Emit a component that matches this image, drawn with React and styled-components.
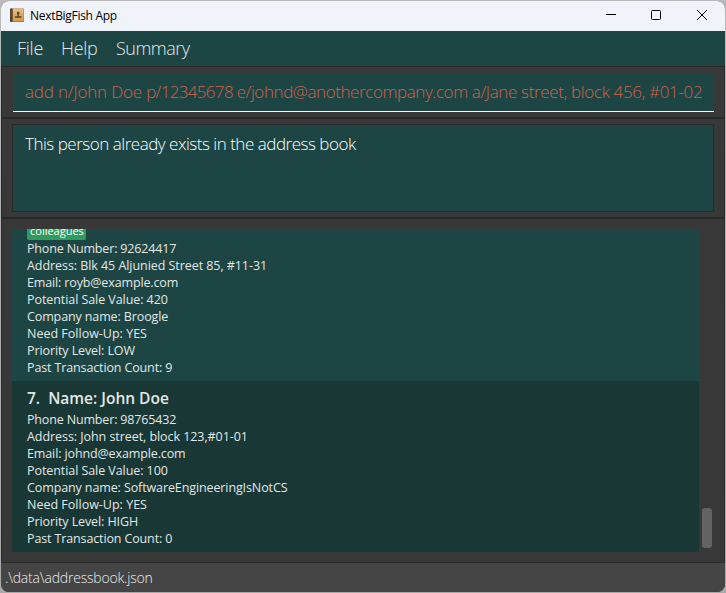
import React from "react";
import styled, { createGlobalStyle } from "styled-components";

const Global = createGlobalStyle`
  * { box-sizing: border-box; }
  body { margin: 0; background: #c4c4c4; overflow: hidden; font-family: "Open Sans", "Noto Sans", sans-serif; }
`;

const Frame = styled.div`
  width: 726px;
  height: 593px;
  padding: 1px;
  background: linear-gradient(#b9b9bb, #b9b9bb 30px, #a9a9a9);
`;

const Window = styled.div`
  width: 724px;
  height: 591px;
  display: flex;
  flex-direction: column;
  overflow: hidden;
  border-radius: 8px;
  background: #383838;
`;

const TitleBar = styled.header`
  height: 30px;
  flex: none;
  display: flex;
  align-items: center;
  padding-left: 9px;
  background: #f0f3f9;
  color: #000;
`;

const Title = styled.span`
  flex: 1;
  margin-left: 5px;
  font-size: 12px;
  line-height: 16px;
  white-space: pre;
  letter-spacing: ${(p) => p.$spacing}px;
`;

const WindowButton = styled.button`
  width: 46px;
  height: 30px;
  padding: 0 0 2px;
  border: 0;
  background: transparent;
  display: flex;
  align-items: center;
  justify-content: center;
`;

const MenuBar = styled.nav`
  height: 35px;
  flex: none;
  display: flex;
  padding-left: 16px;
  background: #1d4543;
`;

const MenuItem = styled.span`
  width: ${(p) => p.$width}px;
  font-size: 18px;
  font-weight: 300;
  line-height: 35px;
  letter-spacing: ${(p) => p.$spacing}px;
  color: #e4eae9;
  white-space: pre;
`;

const Body = styled.main`
  flex: 1;
  display: flex;
  flex-direction: column;
  border: 1px solid #2a2a2a;
  border-width: 1px 1px 0;
`;

const Divider = styled.div`
  height: 2px;
  flex: none;
  background: #2a2a2a;
`;

const CommandBox = styled.div`
  height: 39px;
  flex: none;
  margin: 6px 10px 5px 11px;
  padding-left: 12px;
  background: #1d4543;
  border-bottom: 1px solid #fff;
  color: #cf634d;
  font-size: 17px;
  font-weight: 300;
  line-height: 38px;
  white-space: pre;
`;

const CommandPart = styled.span`
  letter-spacing: ${(p) => p.$spacing}px;
`;

const ResultBox = styled.div`
  height: 88px;
  flex: none;
  margin: 5px 10px 5px;
  padding: 6px 12px;
  background: #1d4543;
  border: 1px solid #2a2a2a;
  color: #fff;
  font-size: 17px;
  font-weight: 300;
  line-height: 26px;
  letter-spacing: ${(p) => p.$spacing}px;
  white-space: pre;
`;

const ListArea = styled.section`
  height: 323px;
  flex: none;
  margin: 10px 12px 0 10px;
  display: flex;
  justify-content: space-between;
`;

const PersonList = styled.div`
  width: 687px;
  overflow: hidden;
  display: flex;
  flex-direction: column;
`;

const Card = styled.article`
  height: ${(p) => p.$height}px;
  flex: none;
  padding: ${(p) => p.$top}px 0 0 15px;
  background: ${(p) => (p.$alternate ? "#1d4543" : "#183735")};
  color: #e3e8e7;
`;

const Tag = styled.div`
  width: 59px;
  height: 17px;
  margin: -6px 0 0;
  padding-left: 3px;
  border-radius: 2px;
  background: #2e9c5c;
  color: #fff;
  font-size: 11px;
  line-height: 16px;
  letter-spacing: ${(p) => p.$spacing}px;
`;

const CardName = styled.h2`
  height: 25px;
  margin: 0;
  font-size: 15.5px;
  font-weight: 600;
  line-height: 25px;
  letter-spacing: ${(p) => p.$spacing}px;
  white-space: pre;
`;

const Field = styled.div`
  height: 17px;
  font-size: 12.5px;
  line-height: 17px;
  letter-spacing: ${(p) => p.$spacing}px;
  white-space: pre;
`;

const ScrollTrack = styled.div`
  width: 10px;
  display: flex;
  align-items: flex-end;
  padding-bottom: 4px;
`;

const ScrollThumb = styled.div`
  width: 10px;
  height: 40px;
  border-radius: 3px;
  background: #636363;
`;

const StatusBar = styled.footer`
  height: 30px;
  flex: none;
  padding-left: 4px;
  border-top: 1px solid #2a2a2a;
  background: #454545;
  color: #ececec;
  font-size: 14px;
  font-weight: 300;
  line-height: 29px;
  letter-spacing: ${(p) => p.$spacing}px;
`;

const roy = [
  ["Phone Number: 92624417", -0.16],
  ["Address: Blk 45 Aljunied Street 85, #11-31", -0.06],
  ["Email: royb@example.com", -0.14],
  ["Potential Sale Value: 420", -0.07],
  ["Company name: Broogle", -0.12],
  ["Need Follow-Up: YES", 0],
  ["Priority Level: LOW", -0.1],
  ["Past Transaction Count: 9", -0.13],
];

const john = [
  ["Phone Number: 98765432", -0.16],
  ["Address: John street, block 123,#01-01", -0.06],
  ["Email: johnd@example.com", -0.12],
  ["Potential Sale Value: 100", -0.07],
  ["Company name: SoftwareEngineeringIsNotCS", -0.11],
  ["Need Follow-Up: YES", 0],
  ["Priority Level: HIGH", -0.1],
  ["Past Transaction Count: 0", -0.13],
];

const Fields = ({ items }) =>
  items.map(([text, spacing]) => (
    <Field key={text} $spacing={spacing}>{text}</Field>
  ));

const BookIcon = () => (
  <svg width="15" height="16" viewBox="0 0 15 16">
    <defs>
      <linearGradient id="cover" x1="0" y1="0" x2="0" y2="1">
        <stop offset="0" stopColor="#e3be80" />
        <stop offset="1" stopColor="#d39c4a" />
      </linearGradient>
    </defs>
    <rect x="0" y="0.5" width="14" height="13.5" rx="0.8" fill="#a87c42" />
    <rect x="0" y="0.5" width="2.6" height="13.5" rx="0.8" fill="#574638" />
    <rect x="3" y="1" width="10.5" height="12" fill="url(#cover)" />
    <rect x="7" y="3.8" width="2.4" height="3" rx="0.8" fill="#5c401f" />
    <path d="M7.6 6.5h1.2v1.8h2.7v1.5H4.9V8.3h2.7z" fill="#5c401f" />
  </svg>
);

export default function App() {
  return (
    <>
      <Global />
      <Frame>
        <Window>
          <TitleBar>
            <BookIcon />
            <Title $spacing={-0.3}>NextBigFish App</Title>
            <WindowButton aria-label="Minimize">
              <svg width="12" height="12" stroke="#000"><path d="M2 5.5h10" /></svg>
            </WindowButton>
            <WindowButton aria-label="Maximize">
              <svg width="12" height="12" fill="none" stroke="#000"><rect x="1.5" y="1.5" width="9" height="9" rx="1" /></svg>
            </WindowButton>
            <WindowButton aria-label="Close">
              <svg width="12" height="12" stroke="#000"><path d="M1 1l10 10M11 1L1 11" /></svg>
            </WindowButton>
          </TitleBar>
          <MenuBar>
            <MenuItem $width={44} $spacing={-0.25}>File</MenuItem>
            <MenuItem $width={55} $spacing={-0.3}>Help</MenuItem>
            <MenuItem $width={80} $spacing={-0.5}>Summary</MenuItem>
          </MenuBar>
          <Body>
            <CommandBox>
              <CommandPart $spacing={-0.18}>{"add n/John Doe "}</CommandPart>
              <CommandPart $spacing={-0.68}>{"p/12345678 "}</CommandPart>
              <CommandPart $spacing={-0.42}>{"e/johnd@anothercompany.com "}</CommandPart>
              <CommandPart $spacing={-0.345}>{"a/Jane street, block 456, #01-02"}</CommandPart>
            </CommandBox>
            <Divider />
            <ResultBox $spacing={-0.48}>This person already exists in the address book</ResultBox>
            <Divider />
            <ListArea>
              <PersonList>
                <Card $alternate $height={152} $top={0}>
                  <Tag $spacing={0}>colleagues</Tag>
                  <Fields items={roy} />
                </Card>
                <Card $height={171} $top={5}>
                  <CardName $spacing={0}>7.  Name: John Doe</CardName>
                  <Fields items={john} />
                </Card>
              </PersonList>
              <ScrollTrack><ScrollThumb /></ScrollTrack>
            </ListArea>
          </Body>
          <StatusBar $spacing={-0.19}>.\data\addressbook.json</StatusBar>
        </Window>
      </Frame>
    </>
  );
}
